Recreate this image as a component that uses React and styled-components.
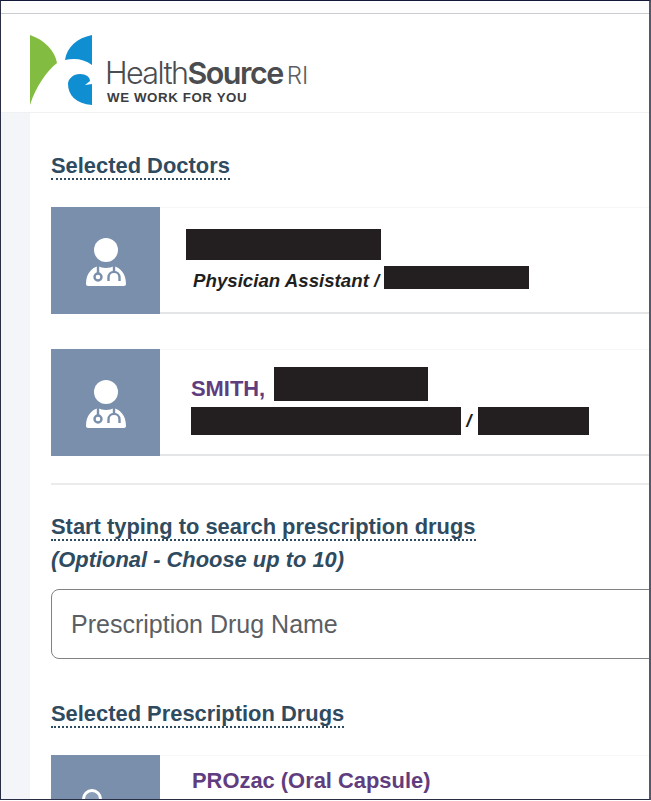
import styled, { createGlobalStyle } from "styled-components";

const GlobalStyle = createGlobalStyle`
  html, body {
    margin: 0;
    padding: 0;
    background: #ffffff;
  }
  * {
    box-sizing: border-box;
  }
`;

const Frame = styled.div`
  width: 651px;
  height: 800px;
  overflow: hidden;
  background: #ffffff;
  border-top: 1px solid #14193a;
  border-left: 1px solid #2a2e45;
  border-right: 2px solid #55586a;
  border-bottom: 1px solid #2a2e45;
  font-family: "Liberation Sans", Arial, sans-serif;
`;

const TopStrip = styled.div`
  height: 13px;
  background: #fdfdfd;
  border-bottom: 1px solid #c9cdd2;
`;

const Header = styled.header`
  height: 99px;
  display: flex;
  align-items: flex-start;
  padding: 20px 0 0 28px;
  gap: 12px;
  background: #ffffff;
  border-bottom: 1px solid #f0f1f3;
`;

const LogoText = styled.div`
  display: flex;
  flex-direction: column;
  padding-top: 23px;
`;

const Wordmark = styled.div`
  font-family: Inter, "Liberation Sans", sans-serif;
  font-size: 30.5px;
  line-height: 31px;
  font-weight: 300;
  letter-spacing: -1.6px;
  color: #4a4c4f;
  white-space: nowrap;

  b {
    font-weight: 600;
    letter-spacing: -1.5px;
  }

  small {
    font-size: 24px;
    margin-left: 4px;
    letter-spacing: 0;
    color: #5c5e61;
  }
`;

const Tagline = styled.div`
  margin-left: 2px;
  font-size: 13.3px;
  line-height: 14px;
  font-weight: 700;
  letter-spacing: 0.6px;
  color: #3b3d40;
  white-space: nowrap;
`;

const Body = styled.div`
  display: flex;
`;

const Rail = styled.div`
  width: 29px;
  flex-shrink: 0;
  background: #f3f5f9;
`;

const Content = styled.main`
  flex: 1;
  min-width: 0;
  padding: 41px 0 0 21px;
`;

const Heading = styled.h2`
  margin: 0;
  display: inline-block;
  font-size: 21.9px;
  line-height: 24px;
  font-weight: 700;
  color: #2f4b5f;
  border-bottom: 2px dotted #2f4b5f;
  white-space: nowrap;
`;

const HeadingRow = styled.div`
  height: ${(p) => p.$height}px;
  margin-top: ${(p) => p.$top || 0}px;
`;

const Card = styled.article`
  height: 107px;
  display: flex;
  margin-bottom: ${(p) => p.$gap || 0}px;
  background: #ffffff;
  border-top: 1px solid #f6f6f6;
  border-bottom: 2px solid #e4e5e7;
`;

const Tile = styled.div`
  width: 109px;
  height: 107px;
  margin-top: -1px;
  flex-shrink: 0;
  display: flex;
  justify-content: ${(p) => p.$justify || "center"};
  padding: ${(p) => p.$top}px 0 0 ${(p) => p.$left || 0}px;
  background: #7a8fab;
`;

const CardBody = styled.div`
  flex: 1;
  min-width: 0;
  display: flex;
  flex-direction: column;
  padding: ${(p) => p.$top}px 0 0 ${(p) => p.$left}px;
`;

const Line = styled.div`
  display: flex;
  align-items: ${(p) => p.$align || "center"};
  margin-top: ${(p) => p.$top || 0}px;
  margin-left: ${(p) => p.$left || 0}px;
`;

const Redacted = styled.span`
  display: block;
  flex-shrink: 0;
  width: ${(p) => p.$w}px;
  height: ${(p) => p.$h}px;
  margin-left: ${(p) => p.$left || 0}px;
  background: #231f20;
`;

const Role = styled.span`
  font-size: 18.7px;
  line-height: 22px;
  font-weight: 700;
  font-style: italic;
  color: #1f1f1f;
  white-space: nowrap;
  transform: translateY(${(p) => p.$shift || 0}px);
`;

const Name = styled.span`
  font-size: 21.9px;
  line-height: 24px;
  font-weight: 700;
  color: #5f3d7e;
  white-space: nowrap;
`;

const Divider = styled.hr`
  margin: 27px 0 30px;
  border: 0;
  border-top: 2px solid #ebebeb;
`;

const Note = styled.div`
  margin-top: 7px;
  font-size: 21.9px;
  line-height: 24px;
  font-weight: 700;
  font-style: italic;
  color: #2f4b5f;
`;

const SearchInput = styled.input`
  display: block;
  width: 640px;
  height: 70px;
  margin-top: 17px;
  padding: 0 19px;
  font-family: "Liberation Sans", Arial, sans-serif;
  font-size: 25px;
  color: #333333;
  background: #ffffff;
  border: 1px solid #808285;
  border-radius: 8px;
  outline: none;

  &::placeholder {
    color: #5b5e62;
    opacity: 1;
  }
`;

function Logo() {
  return (
    <svg width="64" height="72" viewBox="0 0 64 72" aria-label="HealthSource RI logo">
      <path fill="#82bc41" d="M1 1C16 6 26 17 28 29C18 37 7 52 1 71Z" />
      <path fill="#0f8fd2" d="M63 1C48 4 38 13 36 26C46 24 55 25 63 31Z" />
      <path
        fill="#0f8fd2"
        d="M63 71C47 70 39 61 39 50C39 45 44 40 51 40C57 40 61 43 61 47L56 51L63 50Z"
      />
    </svg>
  );
}

function DoctorIcon() {
  return (
    <svg width="42" height="50" viewBox="0 0 42 50" aria-hidden="true">
      <circle cx="21" cy="13" r="12" fill="#ffffff" />
      <path
        fill="#ffffff"
        d="M1 47C1 36 7 31 13 29C17 31.500 25 31.500 29 29C35 31 41 36 41 47C41 48 40 49 39 49H3C2 49 1 48 1 47Z"
      />
      <g fill="none" stroke="#7a8fab" strokeWidth="2.400">
        <path d="M13 28V36" />
        <circle cx="13" cy="40" r="3.500" />
        <path d="M29 28V34" />
        <path d="M23.500 44V40.500C23.500 33 34.500 33 34.500 40.500V44" />
      </g>
    </svg>
  );
}

function DrugIcon() {
  return (
    <svg width="60" height="50" viewBox="0 0 60 50" aria-hidden="true">
      <circle cx="11" cy="11" r="8.500" fill="#8c9fb8" stroke="#ffffff" strokeWidth="3" />
    </svg>
  );
}

export default function App() {
  return (
    <>
      <GlobalStyle />
      <Frame>
        <TopStrip />
        <Header>
          <Logo />
          <LogoText>
            <Wordmark>
              Health<b>Source</b>
              <small>RI</small>
            </Wordmark>
            <Tagline>WE WORK FOR YOU</Tagline>
          </LogoText>
        </Header>
        <Body>
          <Rail />
          <Content>
            <HeadingRow $height={53}>
              <Heading>Selected Doctors</Heading>
            </HeadingRow>

            <Card $gap={35}>
              <Tile $top={30}>
                <DoctorIcon />
              </Tile>
              <CardBody $top={21} $left={26}>
                <Redacted $w={195} $h={31} />
                <Line $top={6} $left={7}>
                  <Role $shift={3}>Physician Assistant /</Role>
                  <Redacted $w={145} $h={23} $left={5} />
                </Line>
              </CardBody>
            </Card>

            <Card>
              <Tile $top={30}>
                <DoctorIcon />
              </Tile>
              <CardBody $top={17} $left={31}>
                <Line $align="flex-end">
                  <Name>SMITH,</Name>
                  <Redacted $w={154} $h={34} $left={9} />
                </Line>
                <Line $top={6}>
                  <Redacted $w={270} $h={28} />
                  <Role>&nbsp;/&nbsp;</Role>
                  <Redacted $w={111} $h={28} $left={1} />
                </Line>
              </CardBody>
            </Card>

            <Divider />

            <Heading>Start typing to search prescription drugs</Heading>
            <Note>(Optional - Choose up to 10)</Note>
            <SearchInput placeholder="Prescription Drug Name" readOnly />

            <HeadingRow $height={53} $top={43}>
              <Heading>Selected Prescription Drugs</Heading>
            </HeadingRow>

            <Card>
              <Tile $top={33} $left={30} $justify="flex-start">
                <DrugIcon />
              </Tile>
              <CardBody $top={13} $left={32}>
                <Name>PROzac (Oral Capsule)</Name>
              </CardBody>
            </Card>
          </Content>
        </Body>
      </Frame>
    </>
  );
}
